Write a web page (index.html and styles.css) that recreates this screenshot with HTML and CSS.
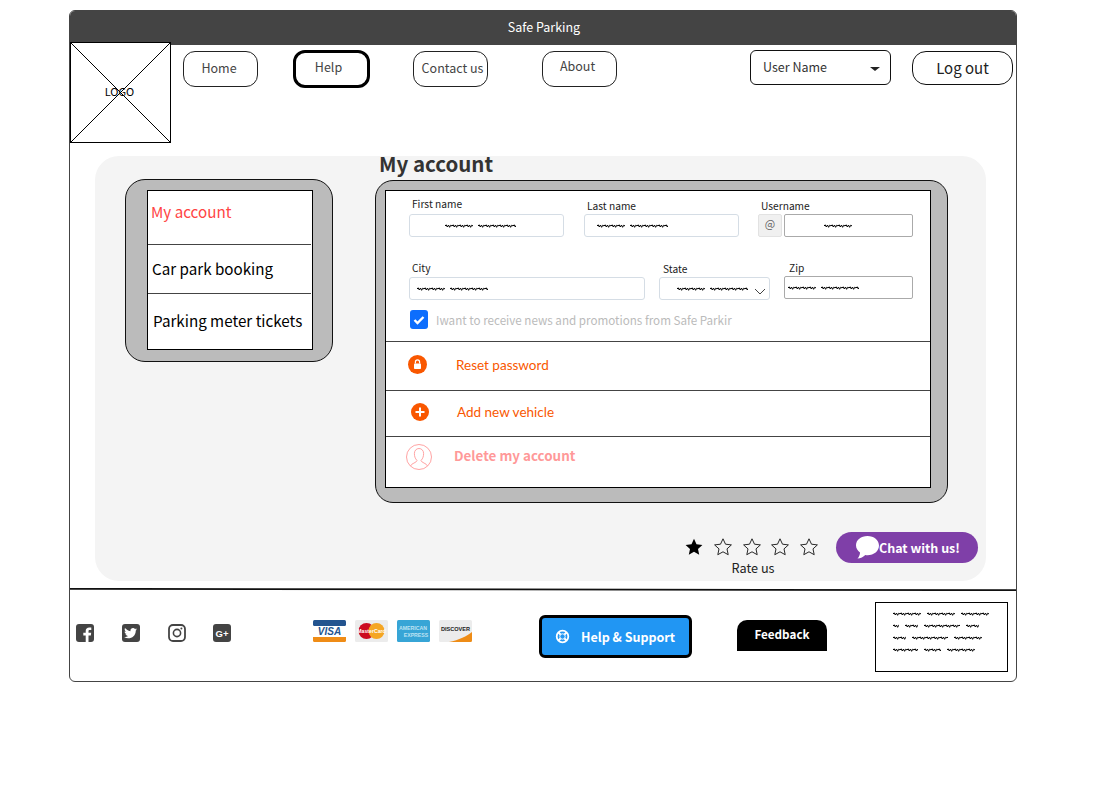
FILE: index.html
```html
<!DOCTYPE html>
<html lang="en">
<head>
  <meta charset="UTF-8" />
  <title>Safe Parking - My account</title>
  <link rel="stylesheet" href="styles.css">
</head>
<body>

  <div class="frame">
    <div class="titlebar">Safe Parking</div>

    <div class="header">
      <div class="logo">
        <svg class="logo-x" width="99" height="99" viewBox="0 0 99 99"><path d="M0 0L99 99M99 0L0 99" stroke="#000" stroke-width="1" /></svg>
        <span class="logo-text">LOGO</span>
      </div>
      <a class="nav-btn nav-home">Home</a>
      <a class="nav-btn nav-help">Help</a>
      <a class="nav-btn nav-contact">Contact us</a>
      <a class="nav-btn nav-about">About</a>
      <div class="user-menu">User Name<span class="caret"></span></div>
      <a class="logout">Log out</a>
    </div>

    <div class="panel">
      <div class="panel-body">
        <div class="side-card">
          <ul class="side-list">
            <li class="side-item side-active">My account</li>
            <li class="side-item side-car">Car park booking</li>
            <li class="side-item side-meter">Parking meter tickets</li>
          </ul>
        </div>

        <div class="account">
          <h1 class="account-title">My account</h1>
          <div class="account-card">
            <div class="account-inner">
              <form class="form">
                <div class="form-row row-one">
                  <div class="field f-first">
                    <label class="lift">First name</label>
                    <div class="input pad-first"><span class="squig w28"></span><span class="squig w38"></span></div>
                  </div>
                  <div class="field f-last">
                    <label>Last name</label>
                    <div class="input pad-last"><span class="squig w28"></span><span class="squig w38"></span></div>
                  </div>
                  <div class="field f-user">
                    <label>Username</label>
                    <div class="input-group">
                      <span class="addon">@</span>
                      <div class="input input-dark pad-user"><span class="squig w28"></span></div>
                    </div>
                  </div>
                </div>

                <div class="form-row row-two">
                  <div class="field f-city">
                    <label>City</label>
                    <div class="input pad-city"><span class="squig w28"></span><span class="squig w38"></span></div>
                  </div>
                  <div class="field f-state">
                    <label class="drop">State</label>
                    <div class="input pad-state">
                      <span class="squig w28"></span><span class="squig w38"></span>
                      <svg class="chev" width="12" height="7" viewBox="0 0 12 7"><path d="M1 1L6 6L11 1" fill="none" stroke="#444" stroke-width="1" /></svg>
                    </div>
                  </div>
                  <div class="field f-zip">
                    <label class="zip-label">Zip</label>
                    <div class="input input-dark pad-zip"><span class="squig w28"></span><span class="squig w38"></span></div>
                  </div>
                </div>

                <div class="check-row">
                  <span class="checkbox">
                    <svg width="12" height="10" viewBox="0 0 12 10"><path d="M1.5 5L4.5 8L10.5 2" fill="none" stroke="#fff" stroke-width="2.4" /></svg>
                  </span>
                  <span class="check-text">Iwant to receive news and promotions from Safe Parkir</span>
                </div>
              </form>

              <div class="action action-reset">
                <svg class="act-icon" width="19" height="19" viewBox="0 0 19 19">
                  <circle cx="9.5" cy="9.5" r="9.5" fill="#f95700" />
                  <rect x="6" y="8.5" width="7" height="5.5" rx="0.8" fill="#fff" />
                  <path d="M7.4 8.5V7a2.1 2.1 0 0 1 4.2 0v1.5" fill="none" stroke="#fff" stroke-width="1.2" />
                </svg>
                <span>Reset password</span>
              </div>
              <div class="action action-add">
                <svg class="act-icon" width="18" height="18" viewBox="0 0 18 18">
                  <circle cx="9" cy="9" r="9" fill="#f95700" />
                  <path d="M9 4.5v9M4.5 9h9" stroke="#fff" stroke-width="2" />
                </svg>
                <span>Add new vehicle</span>
              </div>
              <div class="action action-delete">
                <svg class="act-icon" width="26" height="26" viewBox="0 0 26 26">
                  <circle cx="13" cy="13" r="12.5" fill="none" stroke="#f99" stroke-width="0.9" />
                  <path d="M4.5 22c1-3 6-3 6.5-5.5c-2-2-2.600-4.500-2.600-7c0-3 2-5 4.600-5s4.600 2 4.600 5c0 2.500-.6 5-2.600 7c.5 2.500 5.500 2.500 6.500 5.500" fill="none" stroke="#f99" stroke-width="0.9" />
                </svg>
                <span>Delete my account</span>
              </div>
            </div>
          </div>
        </div>
      </div>

      <div class="panel-bottom">
        <div class="rating">
          <div class="stars">
            <svg width="18" height="18" viewBox="0 0 18 18"><path class="star-on" d="M9 .8l2.500 5.400 5.900.7-4.400 4 1.200 5.800L9 13.800l-5.200 2.900L5 10.900.6 6.900l5.900-.7z" /></svg>
            <svg width="18" height="18" viewBox="0 0 18 18"><path class="star-off" d="M9 .8l2.500 5.400 5.900.7-4.400 4 1.200 5.800L9 13.800l-5.200 2.900L5 10.900.6 6.900l5.900-.7z" /></svg>
            <svg width="18" height="18" viewBox="0 0 18 18"><path class="star-off" d="M9 .8l2.500 5.400 5.900.7-4.400 4 1.200 5.800L9 13.800l-5.200 2.900L5 10.900.6 6.900l5.900-.7z" /></svg>
            <svg width="18" height="18" viewBox="0 0 18 18"><path class="star-off" d="M9 .8l2.500 5.400 5.900.7-4.400 4 1.200 5.800L9 13.800l-5.200 2.900L5 10.900.6 6.900l5.900-.7z" /></svg>
            <svg width="18" height="18" viewBox="0 0 18 18"><path class="star-off" d="M9 .8l2.500 5.400 5.900.7-4.400 4 1.200 5.800L9 13.800l-5.200 2.900L5 10.900.6 6.900l5.900-.7z" /></svg>
          </div>
          <div class="rate-text">Rate us</div>
        </div>
        <a class="chat-btn">
          <svg width="24" height="23" viewBox="0 0 24 23"><path d="M12.500 0C6 0 1 4 1 9.300c0 3 1.600 5.500 4 7.200c0 2-.8 4.300-2.500 6c3 0 6-1.500 7.800-3.400c.8.100 1.500.2 2.200.2C19 19.300 24 15 24 9.600S19 0 12.500 0z" fill="#fff" /></svg>
          <span>Chat with us!</span>
        </a>
      </div>
    </div>

    <svg class="divider" width="946" height="3" viewBox="0 0 946 3"><path d="M0 .8L946 2.200" stroke="#111" stroke-width="1.800" /></svg>

    <div class="footer">
      <div class="social">
        <svg width="18" height="18" viewBox="0 0 18 18"><rect width="18" height="18" rx="3" fill="#444" /><path d="M12.500 18v-6.500h2.300l.4-2.700h-2.700V7.200c0-.8.300-1.300 1.400-1.300h1.400V3.500c-.4 0-1.200-.1-2-.1-2.200 0-3.600 1.300-3.600 3.600v1.800H7.300v2.700h2.400V18z" fill="#fff" /></svg>
        <svg width="18" height="18" viewBox="0 0 18 18"><rect width="18" height="18" rx="3" fill="#444" /><path d="M15 5.200c-.5.200-1 .4-1.500.4.500-.3 1-.8 1.200-1.400-.5.300-1.100.5-1.700.7a2.700 2.700 0 0 0-4.600 2.400C6.200 6.700 4.300 5.700 3 4.100c-.7 1.200-.3 2.800.8 3.600-.4 0-.8-.1-1.200-.3 0 1.300.9 2.400 2.100 2.700-.4.100-.8.100-1.200 0 .3 1.100 1.300 1.800 2.500 1.900-1.100.9-2.500 1.200-3.900 1.100 4.800 3 11.700.3 11.700-6.600.5-.3.900-.8 1.200-1.300z" fill="#fff" /></svg>
        <svg width="18" height="18" viewBox="0 0 18 18"><rect x="1" y="1" width="16" height="16" rx="4" fill="none" stroke="#444" stroke-width="1.800" /><circle cx="9" cy="9" r="3.600" fill="none" stroke="#444" stroke-width="1.600" /><circle cx="13.400" cy="4.600" r="1" fill="#444" /></svg>
        <svg class="social-last" width="18" height="18" viewBox="0 0 18 18"><rect width="18" height="18" rx="3" fill="#444" /><text class="gplus" x="2.500" y="12.500">G+</text></svg>
      </div>

      <div class="cards">
        <svg width="33" height="22" viewBox="0 0 33 22">
          <rect width="33" height="22" rx="1.500" fill="#fff" />
          <rect width="33" height="6" rx="1.500" fill="#23548f" />
          <path d="M0 17h33v3.500a1.500 1.500 0 0 1-1.500 1.500h-30A1.500 1.500 0 0 1 0 20.500z" fill="#ef8c16" />
          <text class="visa" x="16.500" y="15.200">VISA</text>
        </svg>
        <svg width="33" height="22" viewBox="0 0 33 22">
          <rect width="33" height="22" rx="1.500" fill="#ececec" />
          <circle cx="11.500" cy="11" r="8" fill="#cc0b20" />
          <circle cx="21.500" cy="11" r="8" fill="#f5a623" />
          <text class="mc" x="16.500" y="12.800">MasterCard</text>
        </svg>
        <svg width="33" height="22" viewBox="0 0 33 22">
          <rect width="33" height="22" rx="1.500" fill="#37a5d6" />
          <text class="amex" x="16" y="9.500">AMERICAN</text>
          <text class="amex" x="19" y="16.800">EXPRESS</text>
        </svg>
        <svg width="33" height="22" viewBox="0 0 33 22">
          <rect width="33" height="22" rx="1.500" fill="#ececec" />
          <path d="M10 22C20 20 28 16 33 12v8.500a1.500 1.500 0 0 1-1.500 1.500z" fill="#ee8c16" />
          <text class="disc" x="16.500" y="11.200">DISCOVER</text>
        </svg>
      </div>

      <a class="help-btn">
        <svg width="15" height="15" viewBox="0 0 15 15">
          <circle cx="7.500" cy="7.500" r="5.800" fill="none" stroke="#fff" stroke-width="1.800" />
          <circle cx="7.500" cy="7.500" r="2.700" fill="none" stroke="#fff" stroke-width="1" />
          <path d="M3.500 3.500l2 2M11.500 3.500l-2 2M3.500 11.500l2-2M11.500 11.500l-2-2" stroke="#fff" stroke-width="2" />
        </svg>
        <span>Help &amp; Support</span>
      </a>

      <a class="feedback-btn">Feedback</a>

      <div class="note">
        <div class="note-line"><span class="squig w28"></span><span class="squig w28"></span><span class="squig w28"></span></div>
        <div class="note-line"><span class="squig w6"></span><span class="squig w13"></span><span class="squig w36"></span><span class="squig w13"></span></div>
        <div class="note-line"><span class="squig w13"></span><span class="squig w36"></span><span class="squig w28"></span></div>
        <div class="note-line"><span class="squig w25"></span><span class="squig w17"></span><span class="squig w28"></span></div>
      </div>
    </div>
  </div>

</body>
</html>
```

FILE: styles.css
```css
* {
  box-sizing: border-box;
}
body {
  margin: 0;
  background: #fff;
  font-family: "Noto Sans CJK SC", "Noto Sans", sans-serif;
  color: #000;
}
svg {
  display: block;
}
.frame {
  width: 948px;
  height: 672px;
  margin: 10px 0 0 69px;
  border: 1px solid #444;
  border-radius: 6px;
  overflow: hidden;
}
.titlebar {
  height: 34px;
  padding-left: 2px;
  background: #444;
  color: #fff;
  font-size: 12.500px;
  line-height: 32px;
  text-align: center;
}

/* header */
.header {
  display: flex;
  align-items: flex-start;
  height: 98px;
}
.logo {
  position: relative;
  flex: none;
  width: 101px;
  height: 101px;
  margin-top: -3px;
  padding-bottom: 3px;
  border: 1px solid #000;
  background: #fff;
  display: flex;
  align-items: center;
  justify-content: center;
}
.logo-x {
  position: absolute;
  left: 0;
  top: 0;
}
.logo-text {
  position: relative;
  padding-right: 2px;
  font-size: 11px;
  line-height: 14px;
}
.nav-btn {
  flex: none;
  display: flex;
  align-items: center;
  justify-content: center;
  width: 75px;
  height: 36px;
  margin-top: 6px;
  padding-bottom: 3px;
  border: 1px solid #222;
  border-radius: 12px;
  color: #444;
  font-size: 12.500px;
}
.nav-home {
  margin-left: 12px;
  padding-right: 3px;
}
.nav-help {
  width: 77px;
  height: 38px;
  margin: 5px 0 0 35px;
  border: 3px solid #000;
  padding: 0 6px 5px 0;
}
.nav-contact {
  margin-left: 43px;
  padding-left: 4px;
}
.nav-about {
  margin-left: 54px;
  padding: 0 4px 7px 0;
}
.user-menu {
  flex: none;
  position: relative;
  width: 141px;
  height: 35px;
  margin: 5px 0 0 133px;
  padding-left: 12px;
  border: 1px solid #111;
  border-radius: 6px;
  color: #333;
  font-size: 12.500px;
  line-height: 31px;
}
.caret {
  position: absolute;
  right: 10px;
  top: 16px;
  border-left: 5px solid transparent;
  border-right: 5px solid transparent;
  border-top: 4px solid #222;
}
.logout {
  flex: none;
  width: 101px;
  height: 34px;
  margin: 6px 0 0 21px;
  border: 1px solid #111;
  border-radius: 14px;
  text-align: center;
  font-size: 15px;
  line-height: 32px;
  color: #222;
}

/* main panel */
.panel {
  width: 891px;
  height: 425px;
  margin: 13px 0 0 25px;
  background: #f4f4f4;
  border-radius: 24px;
}
.panel-body {
  display: flex;
  align-items: flex-start;
  height: 347px;
}
.side-card {
  flex: none;
  width: 208px;
  height: 183px;
  margin: 23px 0 0 30px;
  padding: 10px 0 0 21px;
  background: #bbb;
  border: 1px solid #111;
  border-radius: 20px;
}
.side-list {
  width: 166px;
  height: 160px;
  margin: 0;
  padding: 0;
  list-style: none;
  background: #fff;
  border: 1px solid #000;
}
.side-item {
  font-size: 15.200px;
  line-height: 24px;
  white-space: nowrap;
  border-bottom: 1px solid #444;
  margin-right: 1px;
}
.side-active {
  height: 54px;
  padding: 8px 0 0 3px;
  color: #f44;
}
.side-car {
  height: 49px;
  padding: 11px 0 0 4px;
}
.side-meter {
  padding: 14px 0 0 5px;
  border-bottom: none;
}
.account {
  flex: none;
  width: 573px;
  margin-left: 42px;
}
.account-title {
  height: 24px;
  margin: 0;
  padding-left: 4px;
  font-size: 20.500px;
  font-weight: 700;
  line-height: 15px;
  color: #333;
}
.account-card {
  height: 323px;
  padding: 9px 0 0 9px;
  background: #bbb;
  border: 1px solid #111;
  border-radius: 18px;
}
.account-inner {
  width: 546px;
  height: 298px;
  background: #fff;
  border: 1px solid #000;
}

/* form */
.form {
  height: 151px;
  padding-left: 23px;
  border-bottom: 1px solid #444;
}
.form-row {
  display: flex;
  align-items: flex-end;
}
.row-one {
  height: 46px;
  gap: 20px;
}
.row-two {
  height: 63px;
  gap: 14px;
}
.field label {
  display: block;
  padding-left: 3px;
  font-size: 10.200px;
  line-height: 14px;
  margin-bottom: 2px;
  color: #222;
}
.row-one .field label {
  margin-bottom: 1px;
}
.row-one .field label.lift {
  margin-bottom: 3px;
}
.field label.zip-label {
  padding-left: 5px;
  margin-bottom: 1px;
}
.field label.drop {
  padding-left: 4px;
  margin-bottom: 1px;
}
.f-first,
.f-last {
  width: 155px;
}
.f-user {
  width: 155px;
  margin-left: -1px;
}
.f-city {
  width: 236px;
}
.f-state {
  width: 111px;
}
.f-zip {
  width: 129px;
  margin-bottom: 1px;
}
.input {
  position: relative;
  display: flex;
  align-items: center;
  gap: 5px;
  height: 23px;
  border: 1px solid #d5dde5;
  border-radius: 3px;
  background: #fff;
}
.input-dark {
  border-color: #aaa;
  border-radius: 2px;
}
.input-group {
  display: flex;
  gap: 2px;
}
.addon {
  flex: none;
  width: 24px;
  height: 23px;
  border: 1px solid #e2e2e2;
  border-radius: 2px;
  background: #f0f0f0;
  color: #666;
  font-size: 11px;
  line-height: 16px;
  text-align: center;
}
.input-group .input {
  flex: 1;
}
.pad-first {
  padding-left: 35px;
}
.pad-last {
  padding-left: 12px;
}
.pad-user {
  padding-left: 39px;
}
.pad-city {
  padding-left: 7px;
}
.pad-state {
  padding-left: 17px;
}
.pad-zip {
  padding-left: 3px;
}
.chev {
  position: absolute;
  right: 3px;
  top: 10px;
}
.squig {
  display: inline-block;
  flex: none;
  height: 4px;
  background: url("data:image/svg+xml,%3Csvg xmlns='http://www.w3.org/2000/svg' width='7' height='4'%3E%3Cpath d='M0 2L1.200 .8L2.300 3L3.500 1L4.600 3.300L5.800 1.200L7 2' fill='none' stroke='%23000' stroke-width='1'/%3E%3C/svg%3E") repeat-x;
}
.w6 {
  width: 6px;
}
.w13 {
  width: 13px;
}
.w17 {
  width: 17px;
}
.w25 {
  width: 25px;
}
.w28 {
  width: 28px;
}
.w36 {
  width: 36px;
}
.w38 {
  width: 38px;
}
.check-row {
  display: flex;
  align-items: center;
  gap: 8px;
  margin: 10px 0 0 1px;
}
.checkbox {
  flex: none;
  display: flex;
  align-items: center;
  justify-content: center;
  width: 18px;
  height: 19px;
  border-radius: 3px;
  background: #0d6efd;
}
.check-text {
  color: #bbb;
  font-size: 11.650px;
  line-height: 16px;
  white-space: nowrap;
}

/* account actions */
.action {
  display: flex;
  align-items: center;
  border-bottom: 1px solid #444;
  color: #f95700;
  font-family: "Lato", sans-serif;
  font-size: 13.500px;
}
.action-reset {
  height: 49px;
  padding: 0 0 3px 22px;
}
.action-reset span {
  margin-left: 29px;
}
.action-add {
  height: 46px;
  padding: 0 0 3px 25px;
}
.action-add span {
  margin-left: 28px;
}
.action-delete {
  height: 40px;
  padding: 0 0 0 20px;
  border-bottom: none;
  color: #f99;
  font-family: "Noto Sans CJK SC", sans-serif;
  font-size: 13.400px;
  font-weight: 700;
}
.action-delete span {
  margin: 0 0 4px 22px;
}

/* rating + chat */
.panel-bottom {
  display: flex;
  justify-content: flex-end;
  align-items: flex-start;
  gap: 18px;
  margin-top: 29px;
  padding-right: 8px;
}
.rating {
  width: 133px;
}
.stars {
  display: flex;
  justify-content: space-between;
  margin-top: 6px;
}
.star-on {
  fill: #000;
}
.star-off {
  fill: none;
  stroke: #111;
  stroke-width: 0.9;
}
.rate-text {
  margin-top: 3px;
  padding-left: 3px;
  font-size: 12.700px;
  line-height: 18px;
  text-align: center;
  color: #222;
}
.chat-btn {
  display: flex;
  align-items: center;
  width: 142px;
  height: 31px;
  padding-left: 19px;
  border-radius: 16px;
  background: #7f3fa8;
  color: #fff;
  font-size: 12.500px;
  font-weight: 700;
}

/* footer */
.divider {
  margin: 7px 0 0 0;
}
.footer {
  display: flex;
  align-items: flex-start;
  padding-top: 1px;
}
.social {
  display: flex;
  gap: 28px;
  margin: 32px 0 0 6px;
}
.social-last {
  margin-left: -1px;
}
.gplus {
  font-family: "Liberation Sans", sans-serif;
  font-size: 9.500px;
  font-weight: 700;
  fill: #fff;
}
.cards {
  display: flex;
  gap: 9px;
  margin: 28px 0 0 82px;
}
.visa {
  font-family: "Liberation Sans", sans-serif;
  font-size: 10px;
  font-weight: 700;
  font-style: italic;
  fill: #23548f;
  text-anchor: middle;
}
.mc {
  font-family: "Liberation Sans", sans-serif;
  font-size: 5.200px;
  font-weight: 700;
  fill: #fff;
  text-anchor: middle;
}
.amex {
  font-family: "Liberation Sans", sans-serif;
  font-size: 5.200px;
  font-weight: 700;
  fill: #bfe3f3;
  text-anchor: middle;
}
.disc {
  font-family: "Liberation Sans", sans-serif;
  font-size: 5.600px;
  font-weight: 700;
  fill: #222;
  text-anchor: middle;
}
.help-btn {
  flex: none;
  display: flex;
  align-items: center;
  gap: 11px;
  width: 153px;
  height: 43px;
  margin: 23px 0 0 67px;
  padding-left: 13px;
  border: 3px solid #000;
  border-radius: 6px;
  background: #2196f3;
  color: #fff;
  font-size: 12.500px;
  font-weight: 700;
}
.feedback-btn {
  flex: none;
  width: 90px;
  height: 31px;
  margin: 28px 0 0 45px;
  border-radius: 10px 10px 0 0;
  background: #000;
  color: #fff;
  font-size: 11.700px;
  font-weight: 700;
  line-height: 28px;
  text-align: center;
}
.note {
  flex: none;
  width: 133px;
  height: 70px;
  margin: 10px 0 0 48px;
  padding: 9px 0 0 17px;
  border: 1px solid #000;
}
.note-line {
  display: flex;
  gap: 6px;
  height: 12px;
}
```
